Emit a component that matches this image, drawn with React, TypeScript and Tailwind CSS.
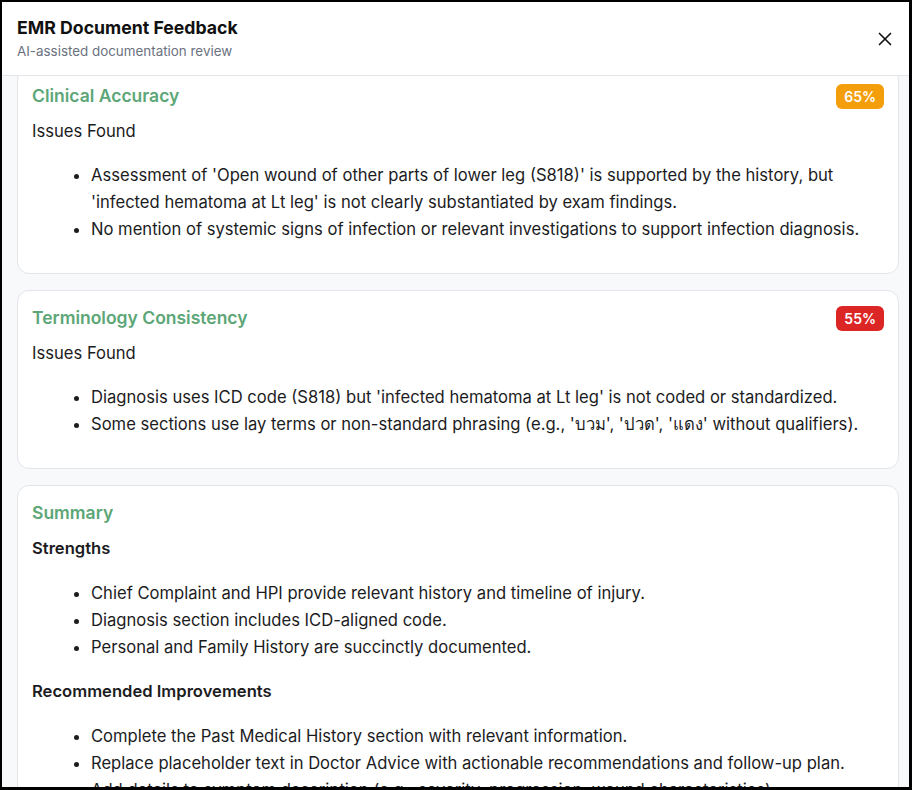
import { useLayoutEffect, useRef } from 'react';
import { X } from 'lucide-react';

type Section = { heading: string; items: string[] };

type Card = {
    title: string;
    score?: number;
    sections: Section[];
};

const cards: Card[] = [
    {
        title: 'Clinical Accuracy',
        score: 65,
        sections: [
            {
                heading: 'Issues Found',
                items: [
                    "Assessment of 'Open wound of other parts of lower leg (S818)' is supported by the history, but 'infected hematoma at Lt leg' is not clearly substantiated by exam findings.",
                    'No mention of systemic signs of infection or relevant investigations to support infection diagnosis.',
                ],
            },
        ],
    },
    {
        title: 'Terminology Consistency',
        score: 55,
        sections: [
            {
                heading: 'Issues Found',
                items: [
                    "Diagnosis uses ICD code (S818) but 'infected hematoma at Lt leg' is not coded or standardized.",
                    "Some sections use lay terms or non-standard phrasing (e.g., 'บวม', 'ปวด', 'แดง' without qualifiers).",
                ],
            },
        ],
    },
    {
        title: 'Summary',
        sections: [
            {
                heading: 'Strengths',
                items: [
                    'Chief Complaint and HPI provide relevant history and timeline of injury.',
                    'Diagnosis section includes ICD-aligned code.',
                    'Personal and Family History are succinctly documented.',
                ],
            },
            {
                heading: 'Recommended Improvements',
                items: [
                    'Complete the Past Medical History section with relevant information.',
                    'Replace placeholder text in Doctor Advice with actionable recommendations and follow-up plan.',
                    'Add details to symptom description (e.g., severity, progression, wound characteristics).',
                    'Document vital signs and relevant examination findings.',
                ],
            },
        ],
    },
];

// 分数徽章颜色
const badgeColor = (score: number) => (score >= 60 ? 'bg-[#f59e0b]' : 'bg-[#dc2626]');

const FeedbackCard = ({ card }: { card: Card }) => {
    const isSummary = !card.score;
    return (
        <div className="rounded-xl border border-[#e3e5e9] bg-white px-[14px] pt-[13px] pb-[14px]">
            <div className="flex h-7 items-center justify-between">
                <h3 className="text-[17.5px] leading-7 font-semibold text-[#5ca677]">{card.title}</h3>
                {card.score !== undefined && (
                    <span className={`${badgeColor(card.score)} rounded-md px-2 h-[25px] flex items-center text-[14px] font-semibold text-white`}>
                        {card.score}%
                    </span>
                )}
            </div>
            {card.sections.map((s) => (
                <div key={s.heading}>
                    <p className={`mt-2 text-[16.6px] leading-[27px] text-[#1c1c1e] ${isSummary ? 'font-semibold' : ''}`}>
                        {s.heading}
                    </p>
                    <ul
                        className={`list-disc pl-[59px] text-[16.6px] leading-[27px] text-[#1c1c1e] ${
                            isSummary ? 'mt-[18px] mb-[17px]' : 'mt-[17px] mb-4'
                        }`}
                    >
                        {s.items.map((it) => (
                            <li key={it}>{it}</li>
                        ))}
                    </ul>
                </div>
            ))}
        </div>
    );
};

export default function App() {
    const scrollRef = useRef<HTMLDivElement>(null);

    // 模拟已滚动的位置
    useLayoutEffect(() => {
        if (scrollRef.current) scrollRef.current.scrollTop = 24;
    }, []);

    return (
        <div className="h-[790px] w-[912px] flex flex-col overflow-hidden bg-white border-black border-l-2 border-t-2 border-r-[3px] border-b-[3px] font-['Inter',sans-serif]">
            {/* 头部 */}
            <div className="flex items-center justify-between border-b border-[#e3e5e9] pl-[15px] pr-[13px] pt-[14px] pb-[14px]">
                <div>
                    <h2 className="text-[17.7px] leading-6 font-bold text-[#111]">EMR Document Feedback</h2>
                    <p className="mt-px text-[13.4px] leading-5 text-[#6b7280]">AI-assisted documentation review</p>
                </div>
                <button className="p-0 text-[#111]">
                    <X size={22} strokeWidth={1.8} />
                </button>
            </div>

            {/* 内容 */}
            <div ref={scrollRef} className="flex-1 overflow-hidden bg-[#f8f9fb] pl-[15px] pr-[10px] py-4">
                <div className="flex flex-col gap-4">
                    {cards.map((c) => (
                        <FeedbackCard key={c.title} card={c} />
                    ))}
                </div>
            </div>
        </div>
    );
}
